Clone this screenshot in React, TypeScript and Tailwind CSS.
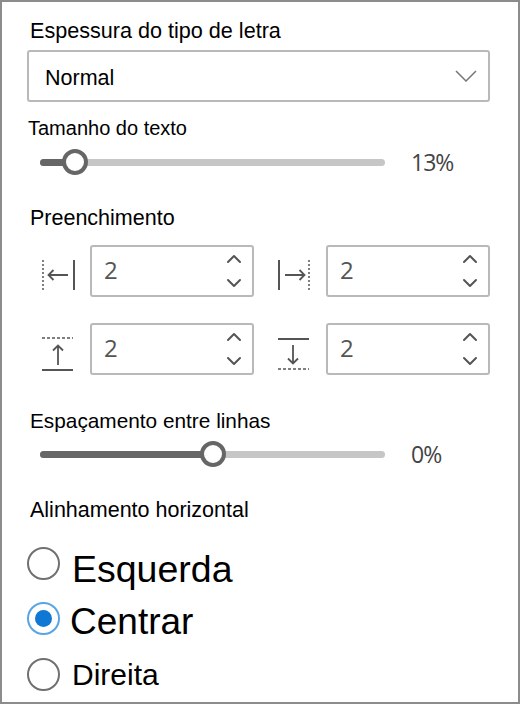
import type { ReactNode } from "react";
import { ChevronDown, ChevronUp } from "lucide-react";

// ── Slider row ──────────────────────────────────────────────────────────────

interface SliderProps {
  fill: string;
  thumb: string;
  value: string;
  className: string;
}

function Slider({ fill, thumb, value, className }: SliderProps) {
  return (
    <div className={`relative flex h-[26px] items-center ${className}`}>
      <div className="ml-[38px] h-[7px] w-[345px] rounded-full bg-[#c6c6c6]">
        <div className={`h-full rounded-full bg-[#666666] ${fill}`} />
      </div>
      <span className="ml-[26px] font-['Open_Sans',sans-serif] text-[23px] leading-[26px] tracking-[-1px] text-[#444444]">
        {value}
      </span>
      <div
        className={`absolute top-0 h-[26px] w-[26px] rounded-full border-[4px] border-[#666666] bg-white ${thumb}`}
      />
    </div>
  );
}

// ── Padding icons ───────────────────────────────────────────────────────────

function PadLeftIcon() {
  return (
    <svg width="36" height="36" viewBox="0 0 36 36" fill="none" stroke="#555555">
      <path d="M3 3V33" strokeWidth="1.5" strokeDasharray="2 2" />
      <path d="M34 3V33" strokeWidth="2" />
      <path d="M8.5 18H28M13.5 13L8.5 18L13.5 23" strokeWidth="1.8" />
    </svg>
  );
}

function PadRightIcon() {
  return (
    <svg width="36" height="36" viewBox="0 0 36 36" fill="none" stroke="#555555">
      <path d="M33 3V33" strokeWidth="1.5" strokeDasharray="2 2" />
      <path d="M3 3V33" strokeWidth="2" />
      <path d="M9 18H28.5M23.5 13L28.5 18L23.5 23" strokeWidth="1.8" />
    </svg>
  );
}

function PadTopIcon() {
  return (
    <svg width="36" height="36" viewBox="0 0 36 36" fill="none" stroke="#555555">
      <path d="M2 2H33" strokeWidth="1.5" strokeDasharray="3 2" />
      <path d="M2 34H33" strokeWidth="2" />
      <path d="M18 9.5V29M13 14.5L18 9.5L23 14.5" strokeWidth="1.8" />
    </svg>
  );
}

function PadBottomIcon() {
  return (
    <svg width="36" height="36" viewBox="0 0 36 36" fill="none" stroke="#555555">
      <path d="M2 3H33" strokeWidth="2" />
      <path d="M2 33H33" strokeWidth="1.5" strokeDasharray="3 2" />
      <path d="M17 9V27.5M12 22.5L17 27.5L22 22.5" strokeWidth="1.8" />
    </svg>
  );
}

// ── Number spinner with its icon ────────────────────────────────────────────

function PadField({ icon, iconOffset }: { icon: ReactNode; iconOffset: string }) {
  return (
    <div className="flex items-start gap-[14px]">
      <div className={iconOffset}>{icon}</div>
      <div className="flex h-[52px] w-[164px] items-center justify-between rounded-[3px] border-2 border-[#b9b9b9] bg-white pl-[12px] pr-[6px]">
        <span className="pb-[3px] font-['Open_Sans',sans-serif] text-[24px] leading-[28px] text-[#555555]">2</span>
        <div className="flex flex-col text-[#555555]">
          <ChevronUp size={24} strokeWidth={2} />
          <ChevronDown size={24} strokeWidth={2} />
        </div>
      </div>
    </div>
  );
}

// ── Radio ───────────────────────────────────────────────────────────────────

interface RadioProps {
  label: string;
  checked?: boolean;
  className: string;
  circleClass?: string;
  labelClass: string;
}

function Radio({ label, checked, className, circleClass = "", labelClass }: RadioProps) {
  return (
    <div className={`flex items-start ${className}`}>
      {checked ? (
        <div
          className={`flex h-[33px] w-[33px] items-center justify-center rounded-full border-2 border-[#58a5e6] ${circleClass}`}
        >
          <div className="h-[17px] w-[17px] rounded-full bg-[#0f78d4]" />
        </div>
      ) : (
        <div className={`h-[33px] w-[33px] rounded-full border-2 border-[#707070] ${circleClass}`} />
      )}
      <span className={`text-black ${labelClass}`}>{label}</span>
    </div>
  );
}

export default function App() {
  return (
    <div className="box-border h-[704px] w-[520px] overflow-hidden border-2 border-[#8c8c8c] bg-white font-['Liberation_Sans',Arial,sans-serif] text-black">
      <div className="pl-[28px] pt-[17px] text-[21.6px] leading-[24px]">Espessura do tipo de letra</div>

      <div className="ml-[25px] mt-[7px] flex h-[52px] w-[463px] items-center justify-between rounded-[3px] border-2 border-[#b9b9b9] pl-[16px] pr-[11px]">
        <span className="pt-[5px] text-[21.5px]">Normal</span>
        <svg width="22" height="12" viewBox="0 0 22 12" fill="none" stroke="#777777" strokeWidth="1.5">
          <path d="M1 1L11 11L21 1" />
        </svg>
      </div>

      <div className="pl-[26px] pt-[14px] text-[20px] leading-[24px]">Tamanho do texto</div>
      <Slider fill="w-[34px]" thumb="left-[60px]" value="13%" className="mt-[9px]" />

      <div className="pl-[28px] pt-[31px] text-[21.5px] leading-[24px]">Preenchimento</div>

      <div className="ml-[38px] mt-[15px] grid w-[450px] grid-cols-[auto_auto] justify-between gap-y-[26px]">
        <PadField icon={<PadLeftIcon />} iconOffset="mt-[12px]" />
        <PadField icon={<PadRightIcon />} iconOffset="mt-[12px]" />
        <PadField icon={<PadTopIcon />} iconOffset="mt-[13px]" />
        <PadField icon={<PadBottomIcon />} iconOffset="mt-[13px]" />
      </div>

      <div className="pl-[28px] pt-[34px] text-[20.8px] leading-[24px]">Espaçamento entre linhas</div>
      <Slider fill="w-[172px]" thumb="left-[198px]" value="0%" className="mt-[8px]" />

      <div className="pl-[28px] pt-[31px] text-[21.5px] leading-[24px]">Alinhamento horizontal</div>

      <Radio label="Esquerda" className="ml-[25px] mt-[25px] gap-[12px]" labelClass="text-[37.5px] leading-[44px]" />
      <Radio
        label="Centrar"
        checked
        className="ml-[25px] mt-[9px] gap-[10px]"
        circleClass="mt-[2px]"
        labelClass="text-[37px] leading-[44px]"
      />
      <Radio
        label="Direita"
        className="ml-[25px] mt-[11px] gap-[12px]"
        circleClass="mt-[3px]"
        labelClass="text-[30px] leading-[40px]"
      />
    </div>
  );
}
